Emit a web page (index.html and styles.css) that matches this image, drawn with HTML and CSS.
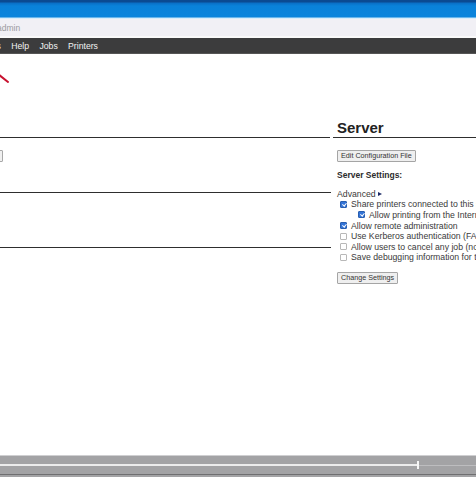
FILE: index.html
```html
<!DOCTYPE html>
<html>
<head>
<meta charset="utf-8">
<link rel="stylesheet" href="styles.css">
</head>
<body>
<div class="page">
  <div class="titlebar"></div>
  <div class="addrbar"><span class="url">admin</span></div>
  <div class="gapline"></div>
  <nav class="nav">
    <a class="first">Classes</a>
    <a>Help</a>
    <a>Jobs</a>
    <a>Printers</a>
  </nav>
  <main class="main">
    <section class="leftcol">
      <div class="lefthead">
        <svg class="arrow" width="14" height="30" viewBox="0 0 14 30"><path d="M-2 18 L8 26" stroke="#c8122f" stroke-width="2" fill="none" stroke-linecap="round"/></svg>
      </div>
      <div class="leftbtn"></div>
      <div class="lefthead2"></div>
      <div class="lefthead3"></div>
    </section>
    <section class="rightcol">
      <h2 class="title"><span>Server</span></h2>
      <div class="body">
        <button class="btn">Edit Configuration File</button>
        <p class="sub">Server Settings:</p>
        <div class="list">
          <div class="row adv">Advanced <span class="tri"></span></div>
          <div class="row"><span class="cb on"></span><span>Share printers connected to this system</span></div>
          <div class="row indent"><span class="cb on"></span><span>Allow printing from the Internet</span></div>
          <div class="row"><span class="cb on"></span><span>Allow remote administration</span></div>
          <div class="row"><span class="cb"></span><span>Use Kerberos authentication (FAQ)</span></div>
          <div class="row"><span class="cb"></span><span>Allow users to cancel any job (not just their own)</span></div>
          <div class="row"><span class="cb"></span><span>Save debugging information for troubleshooting</span></div>
        </div>
        <button class="btn change">Change Settings</button>
      </div>
    </section>
  </main>
  <div class="player">
    <div class="track"><div class="played"></div><div class="knob"></div><div class="rest"></div></div>
    <div class="bottomline"></div>
  </div>
</div>
</body>
</html>
```
FILE: styles.css
```css
* { box-sizing: border-box; }
html, body { margin: 0; padding: 0; }
body {
  width: 476px;
  height: 477px;
  overflow: hidden;
  background: #fff;
  font-family: "Liberation Sans", Arial, sans-serif;
  color: #3a3a3a;
}
.page {
  display: flex;
  flex-direction: column;
  height: 477px;
}
.titlebar {
  height: 19px;
  background: linear-gradient(#0b4a92 0, #0b4a92 2px, #0a6fc6 3px, #0a82da 6px, #0a84dc 17px, #c7e6fa 18px, #e6f3fb 19px);
}
.addrbar {
  height: 17px;
  background: #f1f0f5;
  display: flex;
  align-items: center;
  overflow: hidden;
}
.url {
  font-size: 8.5px;
  color: #9a9a9e;
  margin-left: -3px;
}
.gapline {
  height: 2px;
  background: #fafafa;
}
.nav {
  height: 16px;
  background: #3c3c3d;
  display: flex;
  align-items: center;
  gap: 10.3px;
  overflow: hidden;
  border-bottom: 1px solid #555;
}
.nav a {
  color: #f2f2f2;
  font-size: 8.7px;
  white-space: nowrap;
}
.nav a.first { margin-left: -30px; }
.main {
  flex: 1;
  display: flex;
  gap: 3px;
  overflow: hidden;
}
.leftcol {
  width: 330px;
  flex: none;
  display: flex;
  flex-direction: column;
}
.lefthead {
  height: 84px;
  border-bottom: 1px solid #2e2e2e;
  position: relative;
}
.arrow {
  position: absolute;
  left: 0;
  top: 2px;
}
.leftbtn {
  margin-top: 12px;
  margin-left: -20px;
  width: 23px;
  height: 12px;
  border: 1px solid #a8a8a8;
  border-radius: 1px;
  background: #f0f0f0;
}
.lefthead2 {
  height: 31px;
  border-bottom: 1px solid #2e2e2e;
  width: 331px;
}
.lefthead3 {
  height: 55px;
  border-bottom: 1px solid #2e2e2e;
  width: 331px;
}
.rightcol {
  flex: 1;
  min-width: 0;
  overflow: hidden;
}
.title {
  margin: 0;
  height: 84px;
  border-bottom: 1px solid #2e2e2e;
  display: flex;
  align-items: flex-end;
  padding-left: 4px;
  font-size: 15px;
  line-height: 16px;
  font-weight: bold;
  color: #222;
  padding-bottom: 1px;
}
.body {
  padding-left: 4px;
  white-space: nowrap;
}
.btn {
  display: block;
  margin: 12px 0 0 0;
  height: 12px;
  padding: 0 3px;
  font-family: "Liberation Sans", Arial, sans-serif;
  font-size: 7.2px;
  line-height: 10px;
  color: #333;
  background: #efefef;
  border: 1px solid #a5a5a5;
  border-radius: 1px;
}
.sub {
  margin: 8px 0 0 0;
  font-size: 8.5px;
  line-height: 10px;
  font-weight: bold;
  color: #2c2c2c;
}
.list {
  margin-top: 8.5px;
}
.row {
  height: 10.6px;
  display: flex;
  align-items: center;
  font-size: 8.7px;
  gap: 4px;
}
.row .cb { margin-left: 3px; }
.row.indent .cb { margin-left: 21px; }
.adv { gap: 0; }
.tri {
  display: inline-block;
  width: 0;
  height: 0;
  margin-left: 2px;
  border-left: 4.5px solid #1b2a66;
  border-top: 2.5px solid transparent;
  border-bottom: 2.5px solid transparent;
}
.cb {
  flex: none;
  width: 7px;
  height: 7px;
  border: 1px solid #b8b8b8;
  border-radius: 1px;
  background: #fff;
  position: relative;
}
.cb.on {
  background: #3474d6;
  border-color: #2a5fb0;
}
.cb.on::after {
  content: "";
  position: absolute;
  left: 1.5px;
  top: 0px;
  width: 1.5px;
  height: 3px;
  border-right: 1px solid #fff;
  border-bottom: 1px solid #fff;
  transform: rotate(40deg);
}
.btn.change {
  margin-top: 9.5px;
}
.player {
  height: 22px;
  background: #a3a3a5;
  border-top: 1px solid #cfcfd1;
  display: flex;
  flex-direction: column;
}
.track {
  margin-top: 8px;
  height: 2px;
  display: flex;
  align-items: center;
}
.played {
  width: 417px;
  height: 2px;
  background: #ececec;
}
.knob {
  width: 2px;
  height: 8px;
  background: #f6f6f6;
}
.rest {
  flex: 1;
  height: 1px;
  background: #bdbdbf;
}
.bottomline {
  margin-top: 8px;
  height: 1px;
  background: #6f6f71;
}
```
